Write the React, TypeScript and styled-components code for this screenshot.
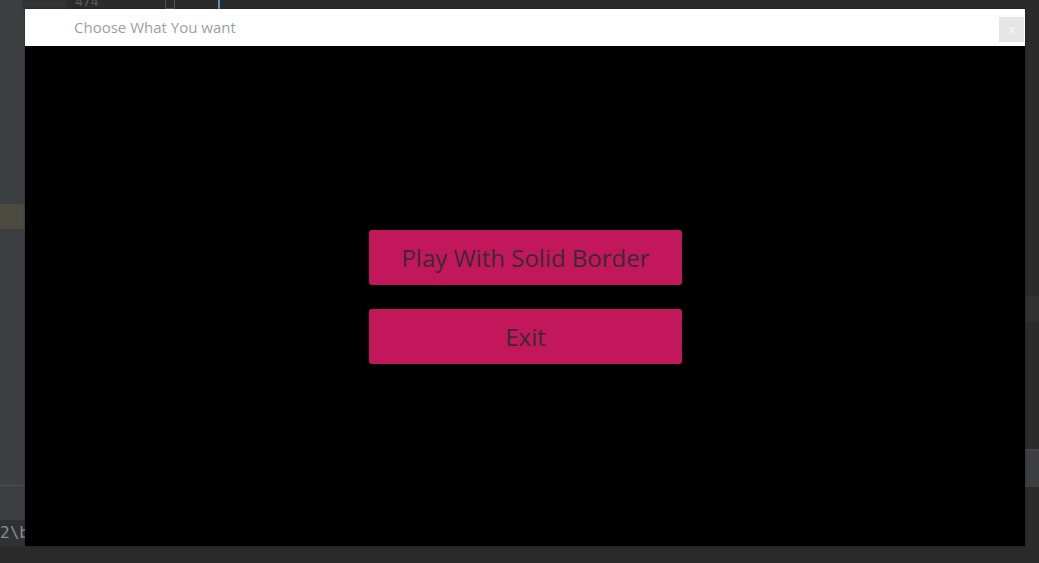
import React from "react";
import styled, { createGlobalStyle } from "styled-components";

const Global = createGlobalStyle`
  html, body { margin: 0; padding: 0; width: 1039px; height: 563px; overflow: hidden; background: #2b2b2b; }
  #root { width: 1039px; height: 563px; }
`;

const Ide = styled.div`
  position: relative;
  width: 1039px;
  height: 563px;
  display: flex;
  flex-direction: column;
  background: #2b2b2b;
  font-family: "DejaVu Sans Mono", monospace;
`;

const TopStrip = styled.div`
  height: 9px;
  display: flex;
  overflow: hidden;
`;

const TopGutter = styled.div`
  width: 22px;
  background: #3c3f41;
`;

const TopNumbers = styled.div`
  width: 45px;
  background: #313335;
`;

const TopCode = styled.div`
  flex: 1;
  position: relative;
  background: #2b2b2b;
  color: #5a5d60;
  font-size: 13px;
  line-height: 9px;
  display: flex;
  align-items: flex-end;
`;

const LineNo = styled.span`
  margin-left: 8px;
  width: 90px;
  transform: translateY(-3px);
`;

const Fold = styled.span`
  width: 10px;
  height: 9px;
  box-sizing: border-box;
  border: 1px solid #555;
  border-top: none;
  margin-right: 43px;
`;

const Caret = styled.span`
  width: 2px;
  height: 9px;
  background: #5a8ec9;
`;

const Middle = styled.div`
  flex: 1;
  display: flex;
`;

const LeftGutter = styled.div`
  width: 25px;
  display: flex;
  flex-direction: column;
  background: #3b3f42;
`;

const GutterSpace = styled.div<{ $h?: number }>`
  height: ${(p) => (p.$h ? `${p.$h}px` : "auto")};
  flex: ${(p) => (p.$h ? "none" : "1")};
`;

const Highlight = styled.div`
  height: 25px;
  background: #4d4a40;
`;

const GutterLine = styled.div`
  height: 1px;
  background: #4a4d50;
`;

const GutterText = styled.div`
  height: 26px;
  background: #2f3234;
  color: #8a8d90;
  font-size: 16px;
  line-height: 26px;
  overflow: hidden;
  white-space: nowrap;
`;

const CenterArea = styled.div`
  flex: 1;
`;

const RightGutter = styled.div`
  width: 14px;
  display: flex;
  flex-direction: column;
  background: #2b2b2b;
`;

const RightBand = styled.div`
  height: 26px;
  background: #313131;
`;

const RightPanel = styled.div`
  height: 36px;
  background: #3b3f42;
  border-top: 2px solid #444;
`;

const BottomStrip = styled.div`
  height: 17px;
  background: #2a2a2a;
`;

const Dialog = styled.div`
  position: absolute;
  left: 25px;
  top: 9px;
  width: 1000px;
  height: 537px;
  display: flex;
  flex-direction: column;
  background: #000;
  box-shadow: 0 0 2px rgba(0, 0, 0, 0.4);
`;

const TitleBar = styled.div`
  height: 37px;
  background: #fff;
  display: flex;
  align-items: center;
  justify-content: space-between;
  padding-left: 49px;
  padding-right: 1px;
`;

const Title = styled.span`
  font-family: "Open Sans", "Noto Sans", sans-serif;
  font-size: 15px;
  color: #9aa0a6;
  transform: translateY(-1px);
`;

const CloseButton = styled.button`
  width: 25px;
  height: 25px;
  border: none;
  padding: 0;
  margin-top: 4px;
  background: #e5e5e5;
  color: #f2f2f2;
  font-family: "Open Sans", sans-serif;
  font-size: 13px;
  font-weight: 700;
  line-height: 25px;
  text-align: center;
`;

const Content = styled.div`
  flex: 1;
  display: flex;
  flex-direction: column;
  align-items: center;
  justify-content: center;
  gap: 24px;
  padding-top: 1px;
`;

const MenuButton = styled.button`
  width: 313px;
  height: 55px;
  border: none;
  border-radius: 3px;
  background: #c2185b;
  color: #3a2a31;
  font-family: "Open Sans", "Noto Sans", sans-serif;
  font-size: 24px;
  padding: 0;
  margin-left: 1px;
`;

export default function App() {
  return (
    <>
      <Global />
      <Ide>
        <TopStrip>
          <TopGutter />
          <TopNumbers />
          <TopCode>
            <LineNo>474</LineNo>
            <Fold />
            <Caret />
          </TopCode>
        </TopStrip>
        <Middle>
          <LeftGutter>
            <GutterSpace $h={195} />
            <Highlight />
            <GutterSpace />
            <GutterLine />
            <GutterSpace $h={34} />
            <GutterText>2\b</GutterText>
          </LeftGutter>
          <CenterArea />
          <RightGutter>
            <GutterSpace $h={287} />
            <RightBand />
            <GutterSpace $h={127} />
            <RightPanel />
            <GutterSpace />
          </RightGutter>
        </Middle>
        <BottomStrip />
        <Dialog>
          <TitleBar>
            <Title>Choose What You want</Title>
            <CloseButton>x</CloseButton>
          </TitleBar>
          <Content>
            <MenuButton>Play With Solid Border</MenuButton>
            <MenuButton>Exit</MenuButton>
          </Content>
        </Dialog>
      </Ide>
    </>
  );
}
